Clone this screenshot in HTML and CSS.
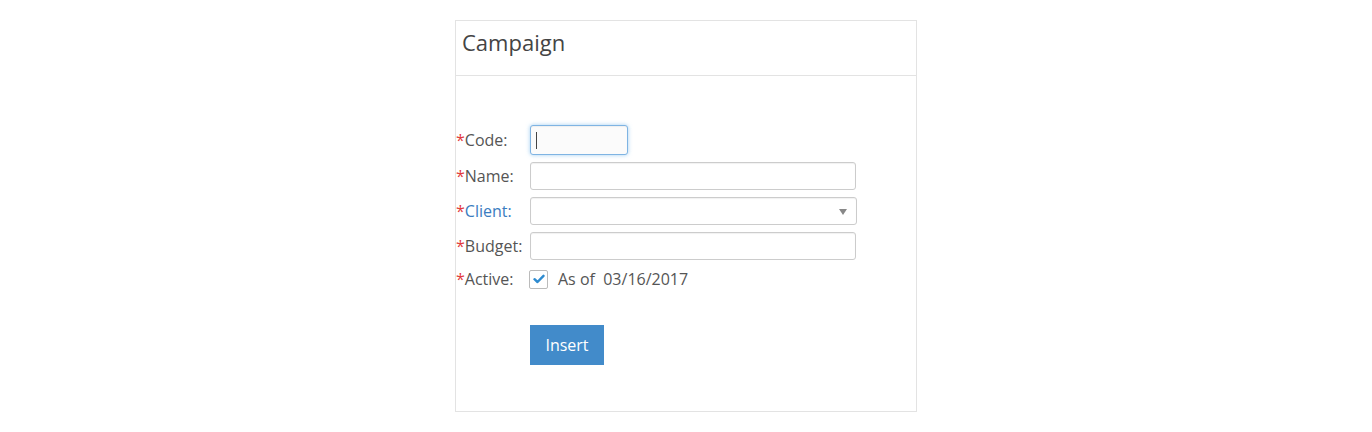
FILE: index.html
```html
<!DOCTYPE html>
<html>
<head>
<meta charset="utf-8">
<link rel="stylesheet" href="styles.css">
</head>
<body>
<div class="panel">
  <div class="panel-head">Campaign</div>
  <div class="panel-body">
    <div class="form">
      <div class="row row-code">
        <label class="lbl"><span class="req">*</span>Code:</label>
        <div class="input input-code focus"><span class="caret"></span></div>
      </div>
      <div class="row">
        <label class="lbl"><span class="req">*</span>Name:</label>
        <div class="input input-wide"></div>
      </div>
      <div class="row">
        <label class="lbl"><span class="req">*</span><span class="link">Client:</span></label>
        <div class="input input-wide select"><span class="arrow"></span></div>
      </div>
      <div class="row">
        <label class="lbl"><span class="req">*</span>Budget:</label>
        <div class="input input-wide"></div>
      </div>
      <div class="row row-active">
        <label class="lbl"><span class="req">*</span>Active:</label>
        <div class="check">
          <span class="box"><svg width="12" height="10" viewBox="0 0 12 10"><path d="M1.5 5.2 L4.5 8 L10.5 1.8" fill="none" stroke="#2e8bd0" stroke-width="2.4" stroke-linecap="round" stroke-linejoin="round"/></svg></span>
          <span class="asof">As of&nbsp; 03/16/2017</span>
        </div>
      </div>
      <div class="actions">
        <button class="btn">Insert</button>
      </div>
    </div>
  </div>
</div>
</body>
</html>
```
FILE: styles.css
```css
html, body {
  margin: 0;
  padding: 0;
  background: #fff;
}
body {
  font-family: "Open Sans", "Liberation Sans", sans-serif;
  color: #555;
  padding-top: 20px;
}
.panel {
  width: 460px;
  margin: 0 auto;
  border: 1px solid #e3e3e3;
  height: 390px;
  display: flex;
  flex-direction: column;
}
.panel-head {
  height: 55px;
  flex: none;
  border-bottom: 1px solid #e3e3e3;
  font-size: 22px;
  color: #444;
  padding-left: 6px;
  padding-top: 7px;
  box-sizing: border-box;
  line-height: 28px;
}
.panel-body {
  padding-top: 49px;
}
.form {
  display: flex;
  flex-direction: column;
  gap: 7px;
}
.row {
  display: flex;
  align-items: center;
  height: 28px;
}
.row-code {
  height: 30px;
}
.lbl {
  width: 74px;
  font-size: 16px;
  color: #555;
}
.req {
  color: #e23b3b;
}
.link {
  color: #3a7cc0;
}
.input {
  height: 28px;
  box-sizing: border-box;
  border: 1px solid #ccc;
  border-radius: 3px;
  background: #fff;
  box-shadow: inset 0 1px 1px rgba(0,0,0,0.06);
  position: relative;
}
.input-code {
  width: 98px;
  height: 30px;
}
.focus {
  border-color: #7fb4e3;
  box-shadow: inset 0 1px 1px rgba(0,0,0,0.05), 0 0 4px rgba(102,175,233,0.6);
  background: #fbfbfb;
}
.caret {
  position: absolute;
  left: 5px;
  top: 6px;
  width: 1px;
  height: 17px;
  background: #444;
}
.input-wide {
  width: 326px;
}
.select {
  width: 327px;
}
.arrow {
  position: absolute;
  right: 9px;
  top: 11px;
  width: 0;
  height: 0;
  border-left: 4px solid transparent;
  border-right: 4px solid transparent;
  border-top: 6px solid #888;
}
.row-active {
  height: 18px;
  margin-top: 3px;
}
.check {
  display: flex;
  align-items: center;
}
.box {
  width: 19px;
  height: 19px;
  box-sizing: border-box;
  border: 1px solid #bbb;
  border-radius: 2px;
  display: flex;
  align-items: center;
  justify-content: center;
  margin-left: -1px;
}
.asof {
  font-size: 16px;
  margin-left: 10px;
  color: #555;
}
.actions {
  padding-left: 74px;
  margin-top: 30px;
}
.btn {
  width: 74px;
  height: 40px;
  border: none;
  border-radius: 0;
  background: #428bca;
  color: #fff;
  font-family: "Open Sans", "Liberation Sans", sans-serif;
  font-size: 16px;
  padding: 0;
}
```
